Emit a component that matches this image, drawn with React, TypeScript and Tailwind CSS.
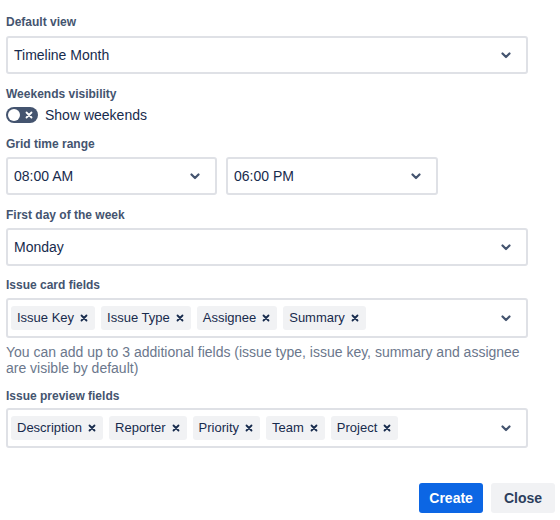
const cardFields = ['Issue Key', 'Issue Type', 'Assignee', 'Summary'];
const previewFields = ['Description', 'Reporter', 'Priority', 'Team', 'Project'];

function Label({ children }: { children: React.ReactNode }) {
  return <div className="text-[12px] leading-4 font-bold text-[#44546f]">{children}</div>;
}

function Chevron() {
  return (
    <svg width="10" height="7" viewBox="0 0 10 7" className="text-[#44546f]">
      <path d="M1.5 1.5 L5 5 L8.5 1.5" fill="none" stroke="currentColor" strokeWidth="2.2" strokeLinecap="round" strokeLinejoin="round" />
    </svg>
  );
}

function Cross({ className = '' }: { className?: string }) {
  return (
    <svg width="8" height="8" viewBox="0 0 8 8" className={className}>
      <path d="M1.5 1.5 L6.5 6.5 M6.5 1.5 L1.5 6.5" stroke="currentColor" strokeWidth="1.8" strokeLinecap="round" />
    </svg>
  );
}

function Select({ value, className = '' }: { value: string; className?: string }) {
  return (
    <div
      className={`h-[38px] flex items-center justify-between pl-[6px] pr-[15px] border-2 border-[#dfe1e6] rounded-[3px] bg-white text-[14px] text-[#172b4d] ${className}`}
    >
      <span>{value}</span>
      <Chevron />
    </div>
  );
}

function MultiSelect({ items }: { items: string[] }) {
  return (
    <div className="h-[40px] w-[522px] flex items-center justify-between pl-[3px] pr-[15px] border-2 border-[#dfe1e6] rounded-[3px] bg-white">
      <div className="flex items-center gap-[6px]">
        {items.map((item) => (
          <span
            key={item}
            className="h-6 flex items-center gap-[6px] pl-[6px] pr-[7px] rounded-[3px] bg-[#f1f2f4] text-[13px] text-[#172b4d]"
          >
            {item}
            <Cross className="text-[#172b4d]" />
          </span>
        ))}
      </div>
      <Chevron />
    </div>
  );
}

export default function App() {
  return (
    <div
      className="w-[560px] h-[520px] bg-white px-[6px] pt-[14px]"
      style={{ fontFamily: '"Liberation Sans", "Segoe UI", sans-serif' }}
    >
      <Label>Default view</Label>
      <Select value="Timeline Month" className="mt-[6px] w-[522px]" />

      <div className="mt-[12px]">
        <Label>Weekends visibility</Label>
      </div>
      <div className="mt-[3px] h-5 flex items-center gap-[7px]">
        <div className="relative w-8 h-4 rounded-full bg-[#44546f] flex items-center">
          <span className="absolute left-[2px] top-[2px] w-3 h-3 rounded-full bg-white" />
          <Cross className="absolute right-[5px] text-white" />
        </div>
        <span className="text-[14px] text-[#172b4d]">Show weekends</span>
      </div>

      <div className="mt-[11px]">
        <Label>Grid time range</Label>
      </div>
      <div className="mt-[5px] flex gap-[9px]">
        <Select value="08:00 AM" className="w-[211px]" />
        <Select value="06:00 PM" className="w-[212px]" />
      </div>

      <div className="mt-[12px]">
        <Label>First day of the week</Label>
      </div>
      <Select value="Monday" className="mt-[5px] w-[522px]" />

      <div className="mt-[11px]">
        <Label>Issue card fields</Label>
      </div>
      <div className="mt-[5px]">
        <MultiSelect items={cardFields} />
      </div>
      <p className="mt-[6px] w-[522px] text-[14px] leading-4 text-[#6b778c]">
        You can add up to 3 additional fields (issue type, issue key, summary and assignee are visible by
        default)
      </p>

      <div className="mt-[12px]">
        <Label>Issue preview fields</Label>
      </div>
      <div className="mt-[4px]">
        <MultiSelect items={previewFields} />
      </div>

      <div className="mt-[35px] flex justify-end gap-2 pr-[5px] -mr-[6px]">
        <button className="h-[30px] px-[10px] rounded-[3px] bg-[#0c66e4] text-white text-[14px] font-bold">
          Create
        </button>
        <button className="h-[30px] px-[13px] rounded-[3px] bg-[#f1f2f4] text-[#2c3e5d] text-[14px] font-bold">
          Close
        </button>
      </div>
    </div>
  );
}
